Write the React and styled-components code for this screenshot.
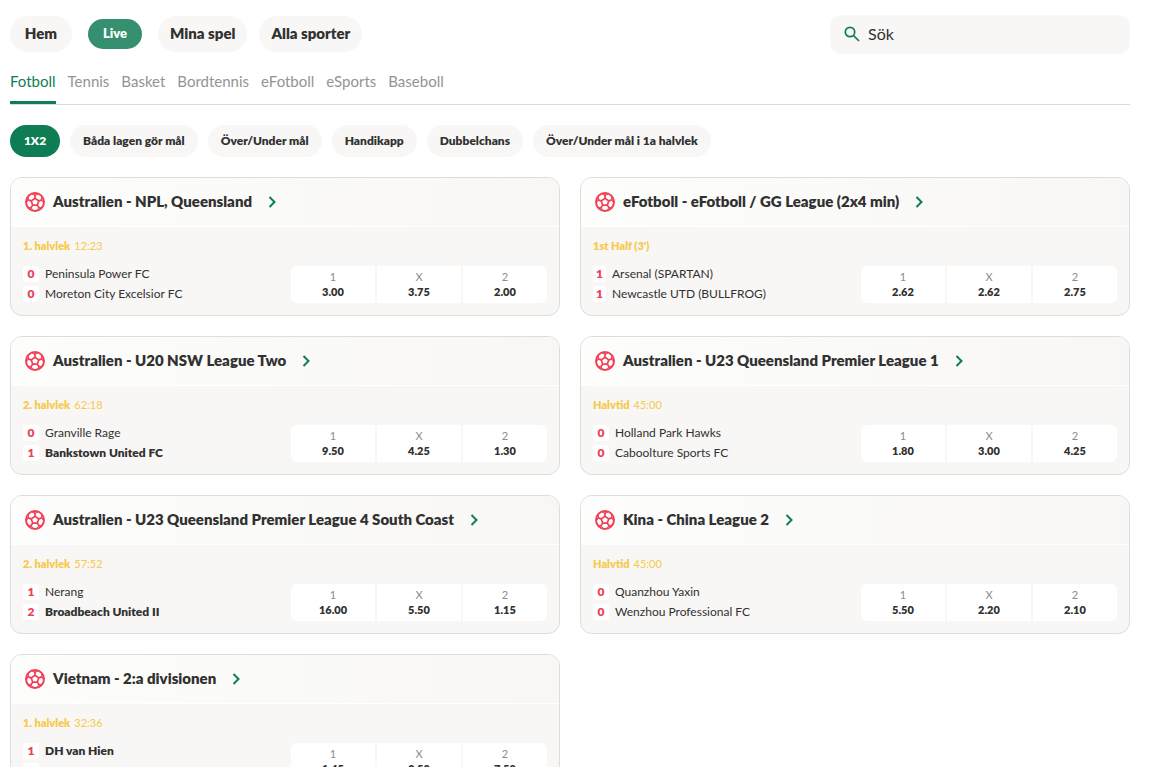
import React, {useState} from 'react';
import styled, {createGlobalStyle} from 'styled-components';

const GlobalStyle = createGlobalStyle`
  * {
    box-sizing: border-box;
  }

  body {
    margin: 0;
    background-color: #fff;
    color: #313131;
    font-family: Lato, 'Liberation Sans', sans-serif;
    font-size: 16px;
  }

  button,
  input {
    font: inherit;
    color: inherit;
  }
`;

const Page = styled.div`
  padding: 15px 23px 20px 10px;
`;

const TopBar = styled.header`
  display: flex;
  justify-content: space-between;
  align-items: center;
  gap: 20px;
`;

const MainNav = styled.nav`
  display: flex;
  align-items: center;
  gap: 12px;
  padding-bottom: 2px;
`;

const NavLink = styled.a`
  display: flex;
  align-items: center;
  justify-content: center;
  height: ${({$active}) => ($active ? 30 : 36)}px;
  min-width: ${({$active}) => ($active ? 54 : 62)}px;
  margin: 0 ${({$active}) => ($active ? 4 : 0)}px;
  padding: 0 12px 2px;
  border-radius: 18px;
  background-color: ${({$active}) => ($active ? '#34906e' : '#f8f7f5')};
  color: ${({$active}) => ($active ? '#fff' : '#313131')};
  font-size: ${({$active}) => ($active ? 13 : 15)}px;
  font-weight: 800;
  text-decoration: none;
  white-space: nowrap;
`;

const SearchBox = styled.label`
  display: flex;
  align-items: center;
  gap: 8px;
  width: 300px;
  height: 39px;
  padding: 0 14px;
  border-radius: 12px;
  background-color: #f8f7f5;

  input {
    flex: 1;
    min-width: 0;
    padding: 0 0 2px;
    border: 0;
    outline: none;
    background: transparent;
  }

  input::placeholder {
    color: #313131;
    opacity: 1;
  }
`;

const SportTabs = styled.nav`
  display: flex;
  gap: 12px;
  height: 37px;
  margin-top: 14px;
  border-bottom: 1px solid #dcdadb;
`;

const SportTab = styled.a`
  height: 36px;
  border-bottom: 3px solid ${({$active}) => ($active ? '#0f7d54' : 'transparent')};
  color: ${({$active}) => ($active ? '#0f7d54' : '#949494')};
  font-size: 15px;
  line-height: 26px;
  text-decoration: none;
  white-space: nowrap;
`;

const Markets = styled.div`
  display: flex;
  gap: 10px;
  margin: 20px 0;
`;

const MarketButton = styled.button`
  height: 32px;
  min-width: 50px;
  padding: 0 13px 2px;
  border: 0;
  border-radius: 16px;
  background-color: ${({$active}) => ($active ? '#0f7d54' : '#f8f7f5')};
  color: ${({$active}) => ($active ? '#fff' : '#313131')};
  font-size: 12px;
  font-weight: 800;
  white-space: nowrap;
  cursor: pointer;
`;

const Leagues = styled.main`
  display: grid;
  grid-template-columns: repeat(2, minmax(0, 1fr));
  gap: 20px;
`;

const Card = styled.section`
  border: 1px solid #dddddc;
  border-radius: 12px;
  background-color: #f8f7f5;
  overflow: hidden;
`;

const CardHeader = styled.a`
  display: flex;
  align-items: center;
  height: 49px;
  padding: 0 14px;
  border-bottom: 1px solid #fff;
  background: linear-gradient(to right, #fdfdfc, #f8f7f5);
  color: inherit;
  text-decoration: none;

  h2 {
    margin: 0 16px 0 8px;
    padding-bottom: 2px;
    font-size: 15px;
    font-weight: 800;
    white-space: nowrap;
  }
`;

const Match = styled.div`
  padding: 12px;
`;

const Period = styled.p`
  margin: 0 0 13px;
  color: #f5ca4d;
  font-size: 11px;
  line-height: 14px;

  b {
    margin-right: 4px;
    font-weight: 800;
  }
`;

const MatchRow = styled.div`
  display: flex;
  justify-content: space-between;
`;

const Teams = styled.div`
  display: flex;
  flex-direction: column;
  gap: 4px;
`;

const Team = styled.div`
  display: flex;
  gap: 6px;
  height: 16px;
  font-size: 12px;
  font-weight: ${({$leading}) => ($leading ? 800 : 400)};
  line-height: 15px;
  white-space: nowrap;
`;

const Score = styled.span`
  width: ${({$narrow}) => ($narrow ? 13 : 16)}px;
  border-radius: 3px;
  background-color: #fff;
  color: #ef4058;
  font-weight: 800;
  text-align: center;
`;

const Odds = styled.div`
  display: grid;
  grid-template-columns: repeat(3, 84px);
  gap: 2px;
  height: 37px;
  border-radius: 6px;
  overflow: hidden;
`;

const OddsButton = styled.button`
  display: flex;
  flex-direction: column;
  align-items: center;
  justify-content: center;
  padding: 0 0 2px;
  border: 0;
  background-color: #fff;
  font-size: 11px;
  line-height: 15px;
  cursor: pointer;

  span {
    color: #8c8c8c;
  }

  b {
    font-weight: 800;
  }
`;

const sports = ['Fotboll', 'Tennis', 'Basket', 'Bordtennis', 'eFotboll', 'eSports', 'Baseboll'];

const markets = [
  '1X2',
  'Båda lagen gör mål',
  'Över/Under mål',
  'Handikapp',
  'Dubbelchans',
  'Över/Under mål i 1a halvlek',
];

const leagues = [
  {
    name: 'Australien - NPL, Queensland',
    period: '1. halvlek',
    time: '12:23',
    teams: [['Peninsula Power FC', 0], ['Moreton City Excelsior FC', 0]],
    odds: ['3.00', '3.75', '2.00'],
  },
  {
    name: 'eFotboll - eFotboll / GG League (2x4 min)',
    period: "1st Half (3')",
    teams: [['Arsenal (SPARTAN)', 1], ['Newcastle UTD (BULLFROG)', 1]],
    odds: ['2.62', '2.62', '2.75'],
  },
  {
    name: 'Australien - U20 NSW League Two',
    period: '2. halvlek',
    time: '62:18',
    teams: [['Granville Rage', 0], ['Bankstown United FC', 1]],
    odds: ['9.50', '4.25', '1.30'],
  },
  {
    name: 'Australien - U23 Queensland Premier League 1',
    period: 'Halvtid',
    time: '45:00',
    teams: [['Holland Park Hawks', 0], ['Caboolture Sports FC', 0]],
    odds: ['1.80', '3.00', '4.25'],
  },
  {
    name: 'Australien - U23 Queensland Premier League 4 South Coast',
    period: '2. halvlek',
    time: '57:52',
    teams: [['Nerang', 1], ['Broadbeach United II', 2]],
    odds: ['16.00', '5.50', '1.15'],
  },
  {
    name: 'Kina - China League 2',
    period: 'Halvtid',
    time: '45:00',
    teams: [['Quanzhou Yaxin', 0], ['Wenzhou Professional FC', 0]],
    odds: ['5.50', '2.20', '2.10'],
  },
  {
    name: 'Vietnam - 2:a divisionen',
    period: '1. halvlek',
    time: '32:36',
    teams: [['DH van Hien', 1], ['Long Dong FC', 0]],
    odds: ['1.45', '3.50', '7.50'],
  },
];

const BallIcon = () => (
  <svg width='20' height='20' viewBox='0 0 20 20' fill='none' stroke='#ef4058' strokeWidth='1.7' aria-hidden='true'>
    <circle cx='10' cy='10' r='9' strokeWidth='2' />
    <path d='M10 6.2 13.7 8.9 12.3 13.2H7.7L6.3 8.9Z' strokeLinejoin='round' />
    <path d='M10 6.2V2M13.7 8.9l4-1.3M12.3 13.2l2.4 3.3M7.7 13.2l-2.4 3.3M6.3 8.9l-4-1.3' />
    <path d='M7 2.2 10 3.4l3-1.2M18.4 10.6 16.6 7.9l.1-3.1M11.4 18.4l2.7-2.6 3.2-.6M2.7 15.2l3.2.6 2.7 2.6M3.3 4.8l.1 3.1-1.8 2.7' strokeWidth='1' />
  </svg>
);

const Chevron = () => (
  <svg width='9' height='12' viewBox='0 0 9 12' fill='none' stroke='#0f7d54' strokeWidth='2' aria-hidden='true'>
    <path d='M1.5 1 6.5 6l-5 5' />
  </svg>
);

const SearchIcon = () => (
  <svg width='16' height='18' viewBox='0 0 16 18' fill='none' stroke='#0f7d54' strokeWidth='1.7' aria-hidden='true'>
    <circle cx='6' cy='6' r='4.7' />
    <path d='m9.5 9.5 5.5 5.5' />
  </svg>
);

const LeagueCard = ({name, period, time, teams, odds}) => {
  const [home, away] = teams.map(team => team[1]);
  const top = Math.max(home, away);

  return (
    <Card>
      <CardHeader href='#league'>
        <BallIcon />
        <h2>{name}</h2>
        <Chevron />
      </CardHeader>
      <Match>
        <Period>
          <b>{period}</b>
          {time}
        </Period>
        <MatchRow>
          <Teams>
            {teams.map(([team, score]) => (
              <Team key={team} $leading={home !== away && score === top}>
                <Score $narrow={home === 1 && away === 1}>{score}</Score>
                {team}
              </Team>
            ))}
          </Teams>
          <Odds>
            {['1', 'X', '2'].map((outcome, i) => (
              <OddsButton key={outcome} type='button'>
                <span>{outcome}</span>
                <b>{odds[i]}</b>
              </OddsButton>
            ))}
          </Odds>
        </MatchRow>
      </Match>
    </Card>
  );
};

const App = () => {
  const [market, setMarket] = useState('1X2');

  return (
    <Page>
      <GlobalStyle />
      <TopBar>
        <MainNav>
          <NavLink href='#hem'>Hem</NavLink>
          <NavLink href='#live' $active>
            Live
          </NavLink>
          <NavLink href='#mina-spel'>Mina spel</NavLink>
          <NavLink href='#alla-sporter'>Alla sporter</NavLink>
        </MainNav>
        <SearchBox>
          <SearchIcon />
          <input type='text' placeholder='Sök' aria-label='Sök' />
        </SearchBox>
      </TopBar>
      <SportTabs>
        {sports.map(sport => (
          <SportTab key={sport} href={`#${sport}`} $active={sport === 'Fotboll'}>
            {sport}
          </SportTab>
        ))}
      </SportTabs>
      <Markets>
        {markets.map(name => (
          <MarketButton key={name} type='button' $active={name === market} onClick={() => setMarket(name)}>
            {name}
          </MarketButton>
        ))}
      </Markets>
      <Leagues>
        {leagues.map(league => (
          <LeagueCard {...league} key={league.name} />
        ))}
      </Leagues>
    </Page>
  );
};

export default App;
